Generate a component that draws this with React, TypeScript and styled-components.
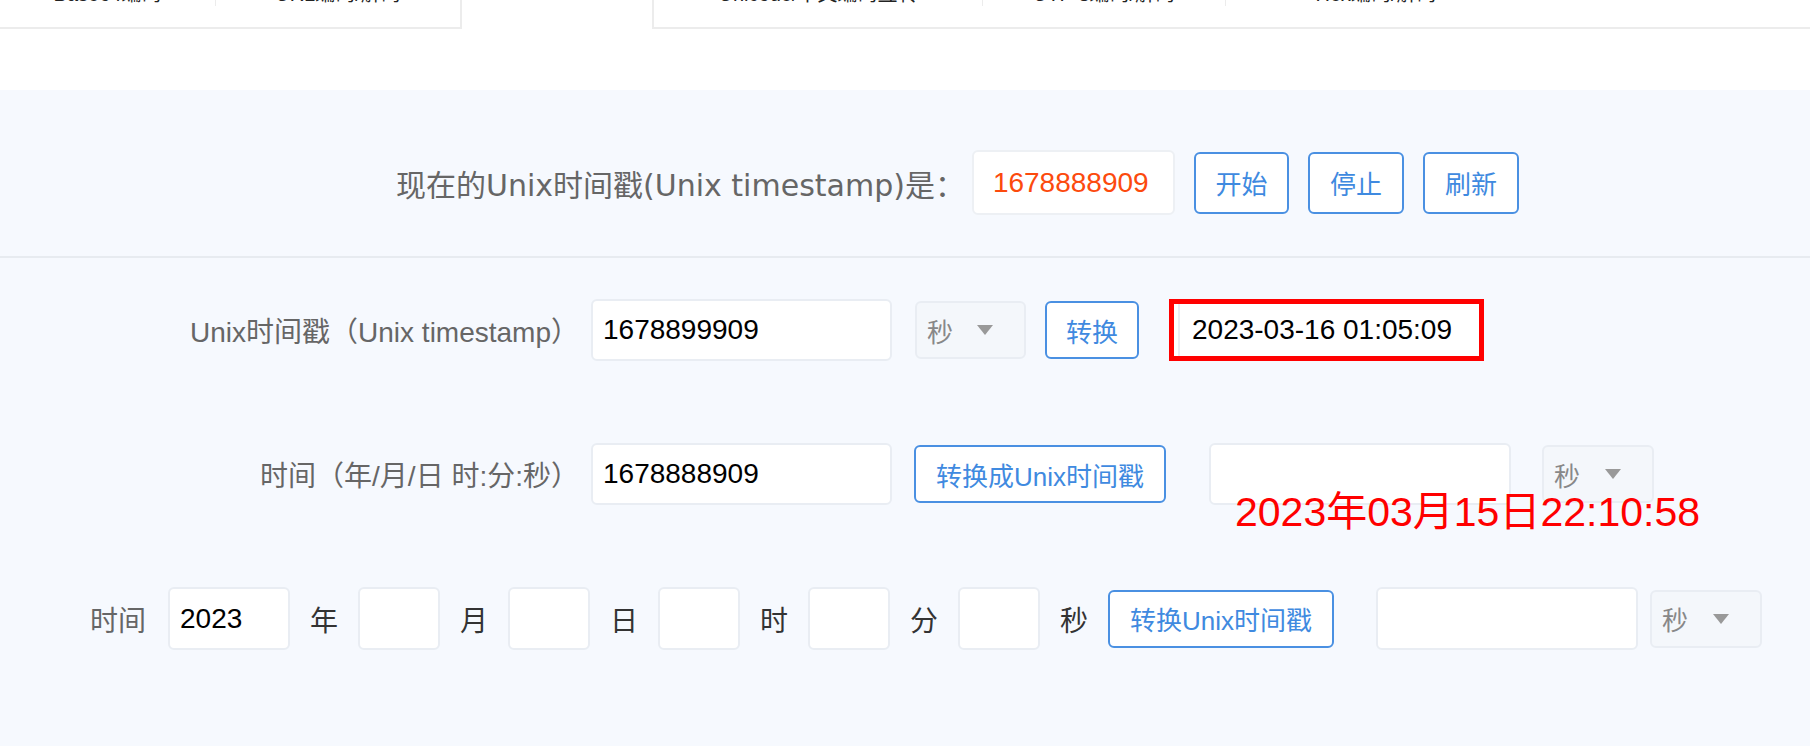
import React from "react";
import styled, { createGlobalStyle } from "styled-components";

const FONT = `"Liberation Sans", "Noto Sans CJK SC", sans-serif`;
const WIDE_FONT = `"DejaVu Sans", "Noto Sans CJK SC", sans-serif`;

const Global = createGlobalStyle`
  html, body { margin: 0; padding: 0; background: #ffffff; }
  body { font-family: ${FONT}; }
  * { box-sizing: border-box; }
`;

const Page = styled.div`
  width: 1810px;
  min-height: 746px;
  display: flex;
  flex-direction: column;
  background: #ffffff;
`;

const TopStrip = styled.div`
  display: flex;
  height: 29px;
  margin-bottom: 61px;
`;

const TabBox = styled.div<{ $w?: number; $left?: boolean }>`
  ${(p) => (p.$w ? `width: ${p.$w}px;` : "flex: 1;")}
  border-bottom: 2px solid #ececec;
  ${(p) => (p.$left ? "border-left: 2px solid #ececec;" : "border-right: 2px solid #ececec;")}
  display: flex;
  align-items: flex-start;
  overflow: hidden;
`;

const Gap = styled.div<{ $w: number }>`
  width: ${(p) => p.$w}px;
`;

const TabCell = styled.div<{ $w?: number; $last?: boolean }>`
  ${(p) => (p.$w ? `width: ${p.$w}px;` : "flex: 1;")}
  height: 6px;
  overflow: hidden;
  position: relative;
  border-right: ${(p) => (p.$last ? "none" : "1px solid #ececec")};
`;

const TabText = styled.span`
  position: absolute;
  top: -16px;
  left: 0;
  right: 0;
  text-align: center;
  font-size: 20px;
  line-height: 20px;
  color: #222;
  white-space: nowrap;
`;

const Panel = styled.div`
  flex: 1;
  background: #f6f9fe;
  display: flex;
  flex-direction: column;
`;

const Header = styled.div`
  display: flex;
  align-items: center;
  padding: 60px 0 41px 396px;
  border-bottom: 2px solid #e7ebf0;
`;

const HeaderLabel = styled.span`
  font-family: ${WIDE_FONT};
  font-size: 30px;
  color: #666666;
  margin-right: 7px;
  white-space: nowrap;
`;

const NowBox = styled.div`
  width: 203px;
  height: 65px;
  background: #ffffff;
  border: 2px solid #edf0f4;
  border-radius: 6px;
  display: flex;
  align-items: center;
  padding-left: 19px;
  font-size: 28px;
  color: #fc4a0d;
  margin-right: 19px;
`;

const Button = styled.button<{ $w: number; $h?: number }>`
  width: ${(p) => p.$w}px;
  height: ${(p) => p.$h ?? 58}px;
  background: #ffffff;
  border: 2px solid #4a90e2;
  border-radius: 6px;
  color: #3f8ae0;
  font-family: ${FONT};
  font-size: 26px;
  padding: 0;
  display: flex;
  align-items: center;
  justify-content: center;
  flex-shrink: 0;
  cursor: pointer;
`;

const HeaderButtons = styled.div`
  display: flex;
  gap: 19px;
`;

const Body = styled.div`
  display: flex;
  flex-direction: column;
  gap: 82px;
  padding-top: 41px;
`;

const Row = styled.div`
  display: flex;
  align-items: center;
  height: 62px;
`;

const RowLabel = styled.label`
  width: 579px;
  text-align: right;
  font-size: 28px;
  color: #666666;
  white-space: nowrap;
  margin-right: 12px;
`;

const Input = styled.div<{ $w: number; $h?: number }>`
  width: ${(p) => p.$w}px;
  height: ${(p) => p.$h ?? 62}px;
  background: #ffffff;
  border: 2px solid #e9edf3;
  border-radius: 6px;
  display: flex;
  align-items: center;
  padding-left: 10px;
  font-size: 28px;
  color: #000000;
  flex-shrink: 0;
  position: relative;
`;

const Select = styled.div<{ $w: number }>`
  width: ${(p) => p.$w}px;
  height: 58px;
  background: #f4f7fb;
  border: 2px solid #e9edf3;
  border-radius: 6px;
  display: flex;
  align-items: center;
  justify-content: space-between;
  padding: 0 31px 0 10px;
  font-size: 26px;
  color: #888888;
  flex-shrink: 0;
`;

const Caret = styled.span`
  width: 0;
  height: 0;
  border-left: 8px solid transparent;
  border-right: 8px solid transparent;
  border-top: 10px solid #999999;
`;

const Spacer = styled.div<{ $w: number }>`
  width: ${(p) => p.$w}px;
  flex-shrink: 0;
`;

const Highlight = styled.div`
  width: 315px;
  height: 62px;
  border: 5px solid #ff0000;
  background: #ffffff;
  display: flex;
  flex-shrink: 0;
`;

const ResultField = styled.div`
  flex: 1;
  border-left: 2px solid #e9edf3;
  margin-left: 4px;
  display: flex;
  align-items: center;
  padding-left: 12px;
  font-size: 28px;
  color: #000000;
  white-space: nowrap;
`;

const Annotation = styled.span`
  position: absolute;
  left: 24px;
  top: 47px;
  font-size: 41px;
  line-height: 1;
  color: #ff0000;
  white-space: nowrap;
  z-index: 2;
`;

const DateRow = styled.div`
  display: flex;
  align-items: center;
  height: 63px;
  padding-left: 90px;
`;

const DateLabel = styled.span`
  font-size: 28px;
  color: #666666;
  margin-right: 22px;
`;

const Unit = styled.span`
  font-size: 28px;
  color: #333333;
  margin: 0 20px;
  white-space: nowrap;
`;

export default function App() {
  const units = ["年", "月", "日", "时", "分"];
  return (
    <Page>
      <Global />
      <TopStrip>
        <TabBox $w={462}>
          <TabCell $w={216}>
            <TabText>Base64编码</TabText>
          </TabCell>
          <TabCell $last>
            <TabText>URL编码/解码</TabText>
          </TabCell>
        </TabBox>
        <Gap $w={190} />
        <TabBox $left>
          <TabCell $w={329}>
            <TabText>Unicode/中文编码互转</TabText>
          </TabCell>
          <TabCell $w={243}>
            <TabText>UTF-8编码/解码</TabText>
          </TabCell>
          <TabCell $w={300} $last>
            <TabText>Hex编码/解码</TabText>
          </TabCell>
        </TabBox>
      </TopStrip>
      <Panel>
        <Header>
          <HeaderLabel>现在的Unix时间戳(Unix timestamp)是：</HeaderLabel>
          <NowBox>1678888909</NowBox>
          <HeaderButtons>
            <Button $w={95} $h={62}>开始</Button>
            <Button $w={96} $h={62}>停止</Button>
            <Button $w={96} $h={62}>刷新</Button>
          </HeaderButtons>
        </Header>
        <Body>
          <Row>
            <RowLabel>Unix时间戳（Unix timestamp）</RowLabel>
            <Input $w={301}>1678899909</Input>
            <Spacer $w={23} />
            <Select $w={111}>
              秒<Caret />
            </Select>
            <Spacer $w={19} />
            <Button $w={94}>转换</Button>
            <Spacer $w={30} />
            <Highlight>
              <ResultField>2023-03-16 01:05:09</ResultField>
            </Highlight>
          </Row>
          <Row>
            <RowLabel>时间（年/月/日 时:分:秒）</RowLabel>
            <Input $w={301}>1678888909</Input>
            <Spacer $w={22} />
            <Button $w={252}>转换成Unix时间戳</Button>
            <Spacer $w={43} />
            <Input $w={302}>
              <Annotation>2023年03月15日22:10:58</Annotation>
            </Input>
            <Spacer $w={31} />
            <Select $w={112}>
              秒<Caret />
            </Select>
          </Row>
          <DateRow>
            <DateLabel>时间</DateLabel>
            <Input $w={122} $h={63}>2023</Input>
            {units.map((u) => (
              <React.Fragment key={u}>
                <Unit>{u}</Unit>
                <Input $w={82} $h={63} />
              </React.Fragment>
            ))}
            <Unit>秒</Unit>
            <Spacer $w={-1} />
            <Button $w={226}>转换Unix时间戳</Button>
            <Spacer $w={42} />
            <Input $w={262} $h={63} />
            <Spacer $w={12} />
            <Select $w={112}>
              秒<Caret />
            </Select>
          </DateRow>
        </Body>
      </Panel>
    </Page>
  );
}
